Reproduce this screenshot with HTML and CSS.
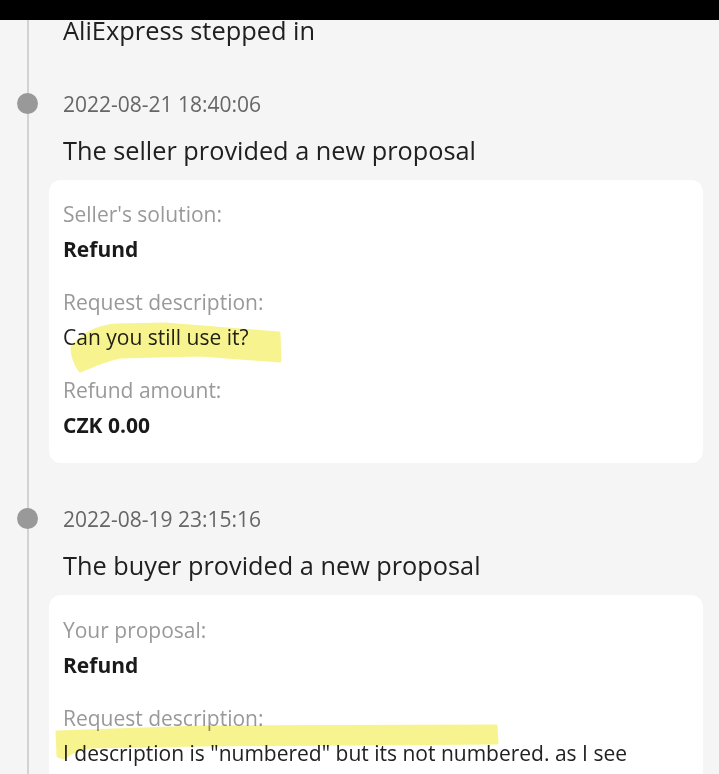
FILE: index.html
```
<!DOCTYPE html>
<html lang="en">
<head>
<meta charset="utf-8">
<title>Dispute history</title>
<link rel="stylesheet" href="styles.css">
</head>
<body>
<div class="page">
  <div class="status-bar"></div>
  <div class="timeline">
    <section class="event event-partial">
      <h2 class="event-title">AliExpress stepped in</h2>
    </section>

    <section class="event">
      <div class="event-date">2022-08-21 18:40:06</div>
      <h2 class="event-title">The seller provided a new proposal</h2>
      <div class="card">
        <div class="field">
          <div class="field-label">Seller's solution:</div>
          <div class="field-value bold">Refund</div>
        </div>
        <div class="field">
          <div class="field-label">Request description:</div>
          <div class="field-value">Can you still use it?</div>
        </div>
        <div class="field">
          <div class="field-label">Refund amount:</div>
          <div class="field-value bold">CZK 0.00</div>
        </div>
      </div>
    </section>

    <section class="event">
      <div class="event-date">2022-08-19 23:15:16</div>
      <h2 class="event-title">The buyer provided a new proposal</h2>
      <div class="card card-open">
        <div class="field">
          <div class="field-label">Your proposal:</div>
          <div class="field-value bold">Refund</div>
        </div>
        <div class="field">
          <div class="field-label">Request description:</div>
          <div class="field-value">I description is "numbered" but its not numbered. as I see</div>
        </div>
      </div>
    </section>
  </div>

  <svg class="marker" width="719" height="774" viewBox="0 0 719 774" aria-hidden="true">
    <path d="M72 347 C82 335 95 327 115 325 L165 324 L279 333 L280 361 L200 355 L120 357 C105 360 92 366 80 371 C75 364 72 355 72 347 Z"/>
    <path d="M57 732 L200 727 L496 726 L497 743 L200 745 L92 747 C77 749 69 753 64 758 L58 756 Z"/>
  </svg>
</div>
</body>
</html>
```
FILE: styles.css
```
* { box-sizing: border-box; }

html, body {
  margin: 0;
  padding: 0;
  background: #f5f5f5;
}

body {
  font-family: "Open Sans", "Noto Sans", sans-serif;
  color: #222;
}

.page {
  position: relative;
  width: 719px;
  height: 774px;
  overflow: hidden;
  background: #f5f5f5;
}

.status-bar {
  position: relative;
  z-index: 2;
  height: 20px;
  background: #000;
}

.timeline {
  position: relative;
  margin-top: -8px;
  display: flex;
  flex-direction: column;
  gap: 41px;
}

.timeline::before {
  content: "";
  position: absolute;
  left: 27px;
  top: 0;
  bottom: 0;
  width: 2px;
  background: #d3d3d3;
}

.event {
  position: relative;
  display: flex;
  flex-direction: column;
}

.event-date {
  position: relative;
  padding-left: 63px;
  font-size: 21px;
  line-height: 30px;
  color: #666;
}

.event-date::before {
  content: "";
  position: absolute;
  left: 17px;
  top: 4px;
  width: 21px;
  height: 21px;
  border-radius: 50%;
  background: #999;
}

.event-title {
  margin: 13px 0 0;
  padding-left: 63px;
  font-size: 25.3px;
  line-height: 36px;
  font-weight: 400;
  color: #202020;
}

.event-partial .event-title {
  margin-top: 0;
  font-size: 25.4px;
}

.card {
  margin: 12px 16px 0 49px;
  padding: 17px 14px 20px;
  background: #fff;
  border-radius: 12px;
  display: flex;
  flex-direction: column;
  gap: 18px;
}

.card-open {
  padding-top: 18px;
  padding-bottom: 40px;
}

.field-label {
  font-size: 21px;
  line-height: 35px;
  color: #999;
}

.field-value {
  font-size: 21px;
  line-height: 35px;
  color: #222;
}

.field-value.bold {
  font-weight: 700;
  color: #1a1a1a;
}

.marker {
  position: absolute;
  left: 0;
  top: 0;
  pointer-events: none;
  mix-blend-mode: multiply;
  opacity: 0.55;
}

.marker path {
  fill: #f0eb35;
  stroke: #f0eb35;
  stroke-width: 3;
  stroke-linejoin: round;
}
```
